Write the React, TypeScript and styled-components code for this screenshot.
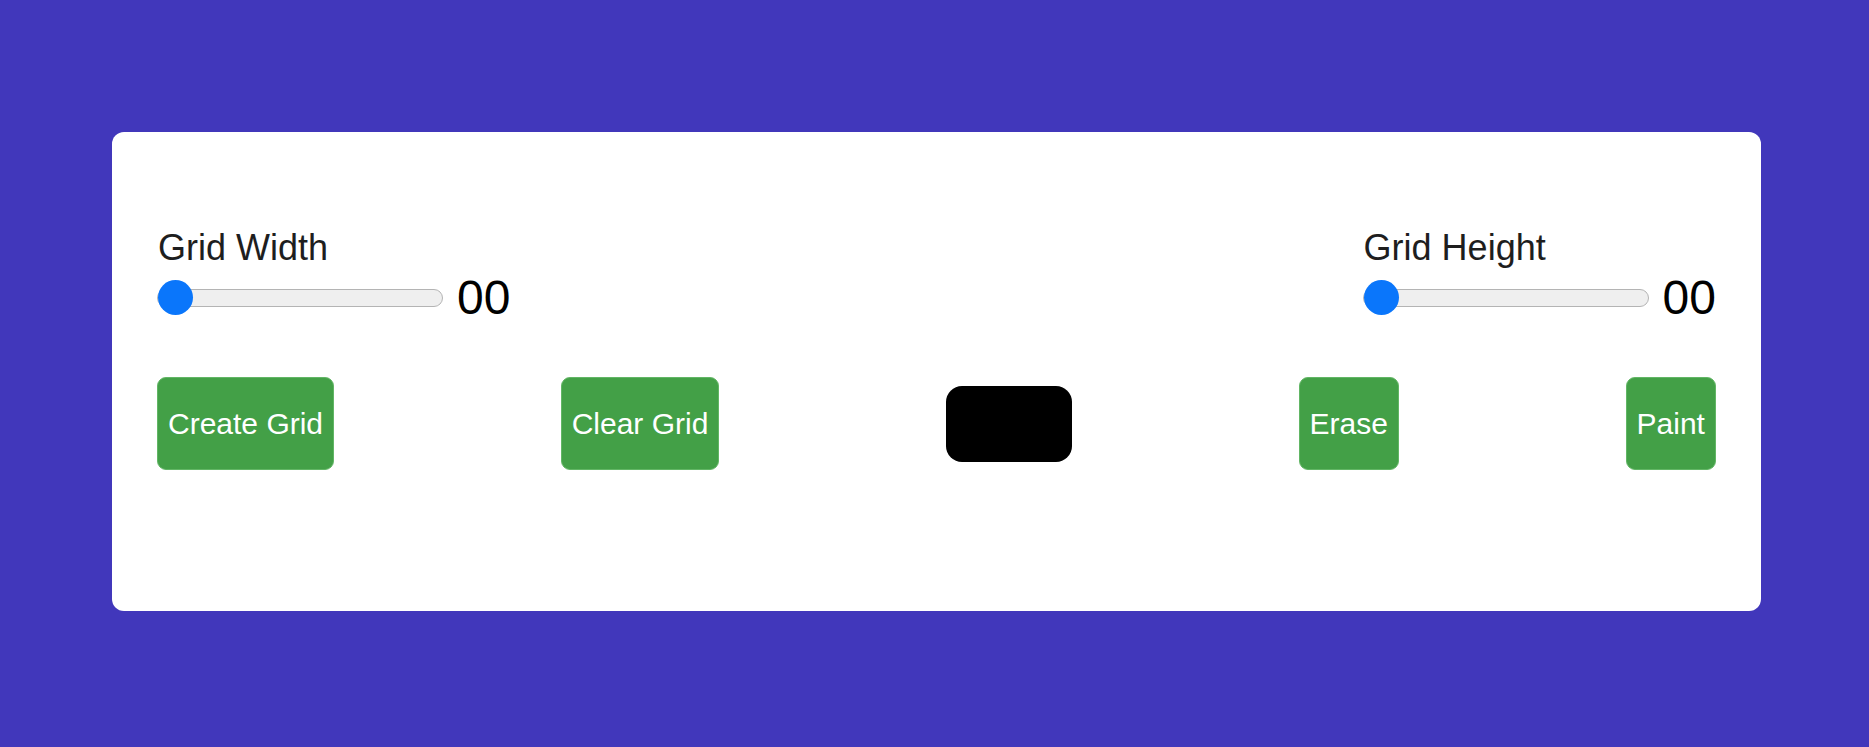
import styled, { createGlobalStyle } from 'styled-components';

const GlobalStyle = createGlobalStyle`
	html, body {
		margin: 0;
		padding: 0;
		background: #4137bb;
		font-family: 'Liberation Sans', Arial, sans-serif;
	}
`;

type SliderProps = {
	label: string;
	value: string;
};

const SizeSlider = ({ label, value }: SliderProps) => (
	<SliderGroup>
		<Label>{label}</Label>
		<SliderRow>
			<Range type='range' min={0} max={100} defaultValue={0} />
			<Value>{value}</Value>
		</SliderRow>
	</SliderGroup>
);

const App = () => {
	const actions = ['Create Grid', 'Clear Grid'];

	return (
		<>
			<GlobalStyle />
			<Page>
				<Card>
					<Header>
						<SizeSlider label='Grid Width' value='00' />
						<SizeSlider label='Grid Height' value='00' />
					</Header>
					<Toolbar>
						{actions.map((text) => (
							<Button key={text}>{text}</Button>
						))}
						<Swatch />
						<Button>Erase</Button>
						<Button>Paint</Button>
					</Toolbar>
				</Card>
			</Page>
		</>
	);
};

const Page = styled.main`
	min-height: 747px;
	padding-top: 132px;
	box-sizing: border-box;
`;

const Card = styled.section`
	width: 1649px;
	height: 479px;
	margin-left: 112px;
	padding: 95px 45px 0 45px;
	box-sizing: border-box;
	background: #ffffff;
	border-radius: 12px;
	display: flex;
	flex-direction: column;
	gap: 52px;
`;

const Header = styled.div`
	display: flex;
	justify-content: space-between;
	align-items: flex-start;
`;

const SliderGroup = styled.div`
	display: flex;
	flex-direction: column;
	gap: 2px;
`;

const Label = styled.label`
	font-size: 36px;
	color: #1e1e1e;
	line-height: 41px;
	padding-left: 1px;
`;

const SliderRow = styled.div`
	display: flex;
	align-items: center;
	gap: 14px;
`;

const Range = styled.input`
	-webkit-appearance: none;
	appearance: none;
	width: 286px;
	height: 36px;
	margin: 0;
	background: transparent;

	&::-webkit-slider-runnable-track {
		height: 18px;
		box-sizing: border-box;
		background: #efefef;
		border: 1px solid #b4b4b4;
		border-radius: 9px;
	}

	&::-webkit-slider-thumb {
		-webkit-appearance: none;
		width: 35px;
		height: 35px;
		margin-top: -9.5px;
		border-radius: 50%;
		background: #0a76fb;
		border: none;
	}
`;

const Value = styled.span`
	font-size: 48px;
	line-height: 55px;
	color: #000000;
`;

const Toolbar = styled.div`
	display: flex;
	justify-content: space-between;
	align-items: center;
`;

const Button = styled.button`
	height: 93px;
	padding: 0 10px;
	border: 1px solid #62b665;
	border-radius: 9px;
	background: #43a047;
	color: #ffffff;
	font-family: 'Liberation Sans', Arial, sans-serif;
	font-size: 30px;
	cursor: pointer;
`;

const Swatch = styled.div`
	width: 126px;
	height: 76px;
	border-radius: 16px;
	background: #000000;
`;

export default App;
